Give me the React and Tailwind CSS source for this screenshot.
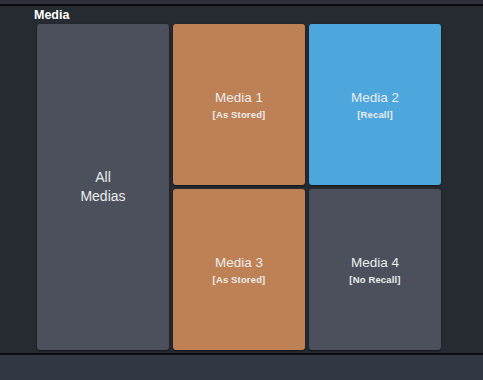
export default function App() {
  const tile = "rounded-[3px] flex flex-col items-center justify-center text-[#ececec] shadow-[0_1px_2px_rgba(0,0,0,0.5)]";
  const sub = "text-[9.5px] leading-[12px] font-bold tracking-[0.15px] mt-[3px]";
  return (
    <div className="w-[483px] h-[380px] flex flex-col bg-[#262a31] overflow-hidden" style={{ fontFamily: '"Liberation Sans", Arial, sans-serif' }}>
      <div className="h-[4px] bg-[#2c3038]" />
      <div className="h-[2px] bg-[#0b0c0e]" />
      <div className="flex-1 flex flex-col">
        <div className="pl-[34px] h-[18px] pt-[2px] text-[12.5px] leading-[14px] font-bold text-white">Media</div>
        <div className="pl-[37px] grid grid-cols-[132px_132px_132px] grid-rows-[161px_161px] gap-[4px]">
          <div className={`${tile} row-span-2 bg-[#4b505c]`}>
            <div className="text-[14px] leading-[19px] text-center">All<br />Medias</div>
          </div>
          <div className={`${tile} bg-[#be8155]`}>
            <div className="text-[13.5px] leading-[17px]">Media 1</div>
            <div className={sub}>[As Stored]</div>
          </div>
          <div className={`${tile} bg-[#4da6dc]`}>
            <div className="text-[13.5px] leading-[17px]">Media 2</div>
            <div className={sub}>[Recall]</div>
          </div>
          <div className={`${tile} bg-[#be8155]`}>
            <div className="text-[13.5px] leading-[17px]">Media 3</div>
            <div className={sub}>[As Stored]</div>
          </div>
          <div className={`${tile} bg-[#4b505c]`}>
            <div className="text-[13.5px] leading-[17px]">Media 4</div>
            <div className={sub}>[No Recall]</div>
          </div>
        </div>
      </div>
      <div className="h-[2px] bg-[#0b0c0e]" />
      <div className="h-[25px] bg-[#323744]" />
    </div>
  );
}
